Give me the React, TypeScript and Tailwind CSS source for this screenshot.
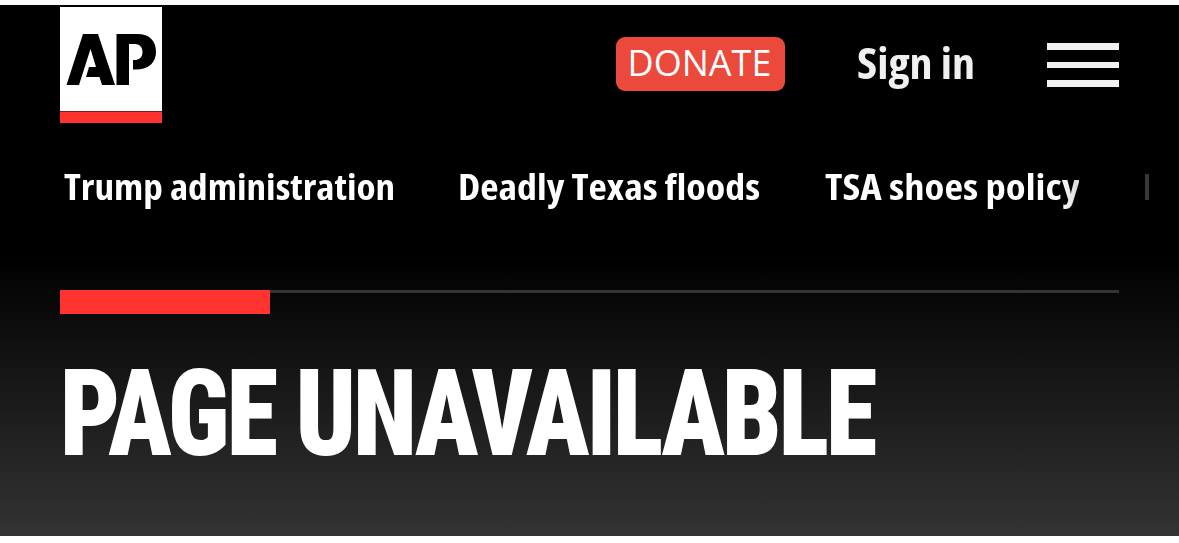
const topics = [
  { label: "Trump administration", width: "w-[394px]", text: "scale-x-[1.088]" },
  { label: "Deadly Texas floods", width: "w-[367px]", text: "scale-x-[1.108]" },
  {
    label: "TSA shoes policy",
    width: "w-[320px]",
    text: "scale-x-[1.13] bg-linear-to-r/srgb from-white from-92% to-[#d8d8d8] bg-clip-text text-transparent",
  },
];

export default function App() {
  return (
    <div className="flex h-[543px] w-[1179px] flex-col overflow-hidden bg-white font-['Open_Sans',sans-serif] text-white">
      <div className="h-[5px] shrink-0 bg-[#fafcfc]" />
      <header className="h-[250px] shrink-0 bg-black">
        <div className="flex h-[118px] items-start px-[60px] pt-[2px]">
          <ApLogo />
          <div className="mt-[30px] ml-auto flex h-[54px] items-center">
            <button
              type="button"
              className="flex h-[54px] w-[169px] items-center justify-center rounded-[9px] bg-[#eb493c] pr-[2px] pb-[2px] text-[36px] leading-none"
            >
              DONATE
            </button>
            <a
              href="#"
              className="ml-[72px] w-[118px] origin-left scale-x-[1.07] pb-[3px] text-[43px] leading-none font-bold whitespace-nowrap text-[#f0f0f0] [font-stretch:75%]"
            >
              Sign in
            </a>
            <MenuButton />
          </div>
        </div>
        <nav className="flex h-[128px] items-center pl-[64px] text-[36px] leading-[48px] font-bold whitespace-nowrap [font-stretch:75%]">
          {topics.map((topic) => (
            <a key={topic.label} href="#" className={`shrink-0 ${topic.width}`}>
              <span className={`inline-block origin-left ${topic.text}`}>{topic.label}</span>
            </a>
          ))}
          <span className="h-[26px] w-[4px] shrink-0 bg-[#383838]" />
        </nav>
      </header>
      <main className="flex h-[281px] shrink-0 flex-col bg-linear-to-b/srgb from-black to-[#333333] px-[60px] pt-[35px]">
        <div className="h-6 border-t-[3px] border-[#333333]">
          <div className="-mt-[3px] h-6 w-[210px] bg-[#ff3431]" />
        </div>
        <h1 className="mt-[40px] origin-left scale-x-[0.867] font-['Roboto',sans-serif] text-[121px] leading-[120px] font-black tracking-[-3.4px] whitespace-nowrap [font-stretch:75%] [word-spacing:-1px]">
          PAGE UNAVAILABLE
        </h1>
      </main>
    </div>
  );
}

function ApLogo() {
  return (
    <svg width="102" height="116" viewBox="0 0 102 116" aria-label="AP">
      <path d="M0 0H102V104H0Z" fill="#fff" />
      <path d="M0 104.5H102V116H0Z" fill="#ff322e" />
      <path
        d="M23 27H38L55 78H42L39.5 70H26L29 60H36L30.5 42L19 78H6.5Z"
        fill="#000"
      />
      <path
        d="M56.5 27H77C90 27 96 34 96 45C96 56 88 63.5 73 62.5V53C79 53.5 82.5 50.5 82.5 45C82.5 40 79.5 37 75 37H69V78H56.5Z"
        fill="#000"
      />
    </svg>
  );
}

function MenuButton() {
  return (
    <button
      type="button"
      aria-label="Menu"
      className="mt-[2px] ml-[72px] flex w-[72px] flex-col gap-[12px]"
    >
      <span className="h-[6.5px] bg-[#f0f0f0]" />
      <span className="h-[6.5px] bg-[#f0f0f0]" />
      <span className="h-[6.5px] bg-[#f0f0f0]" />
    </button>
  );
}
